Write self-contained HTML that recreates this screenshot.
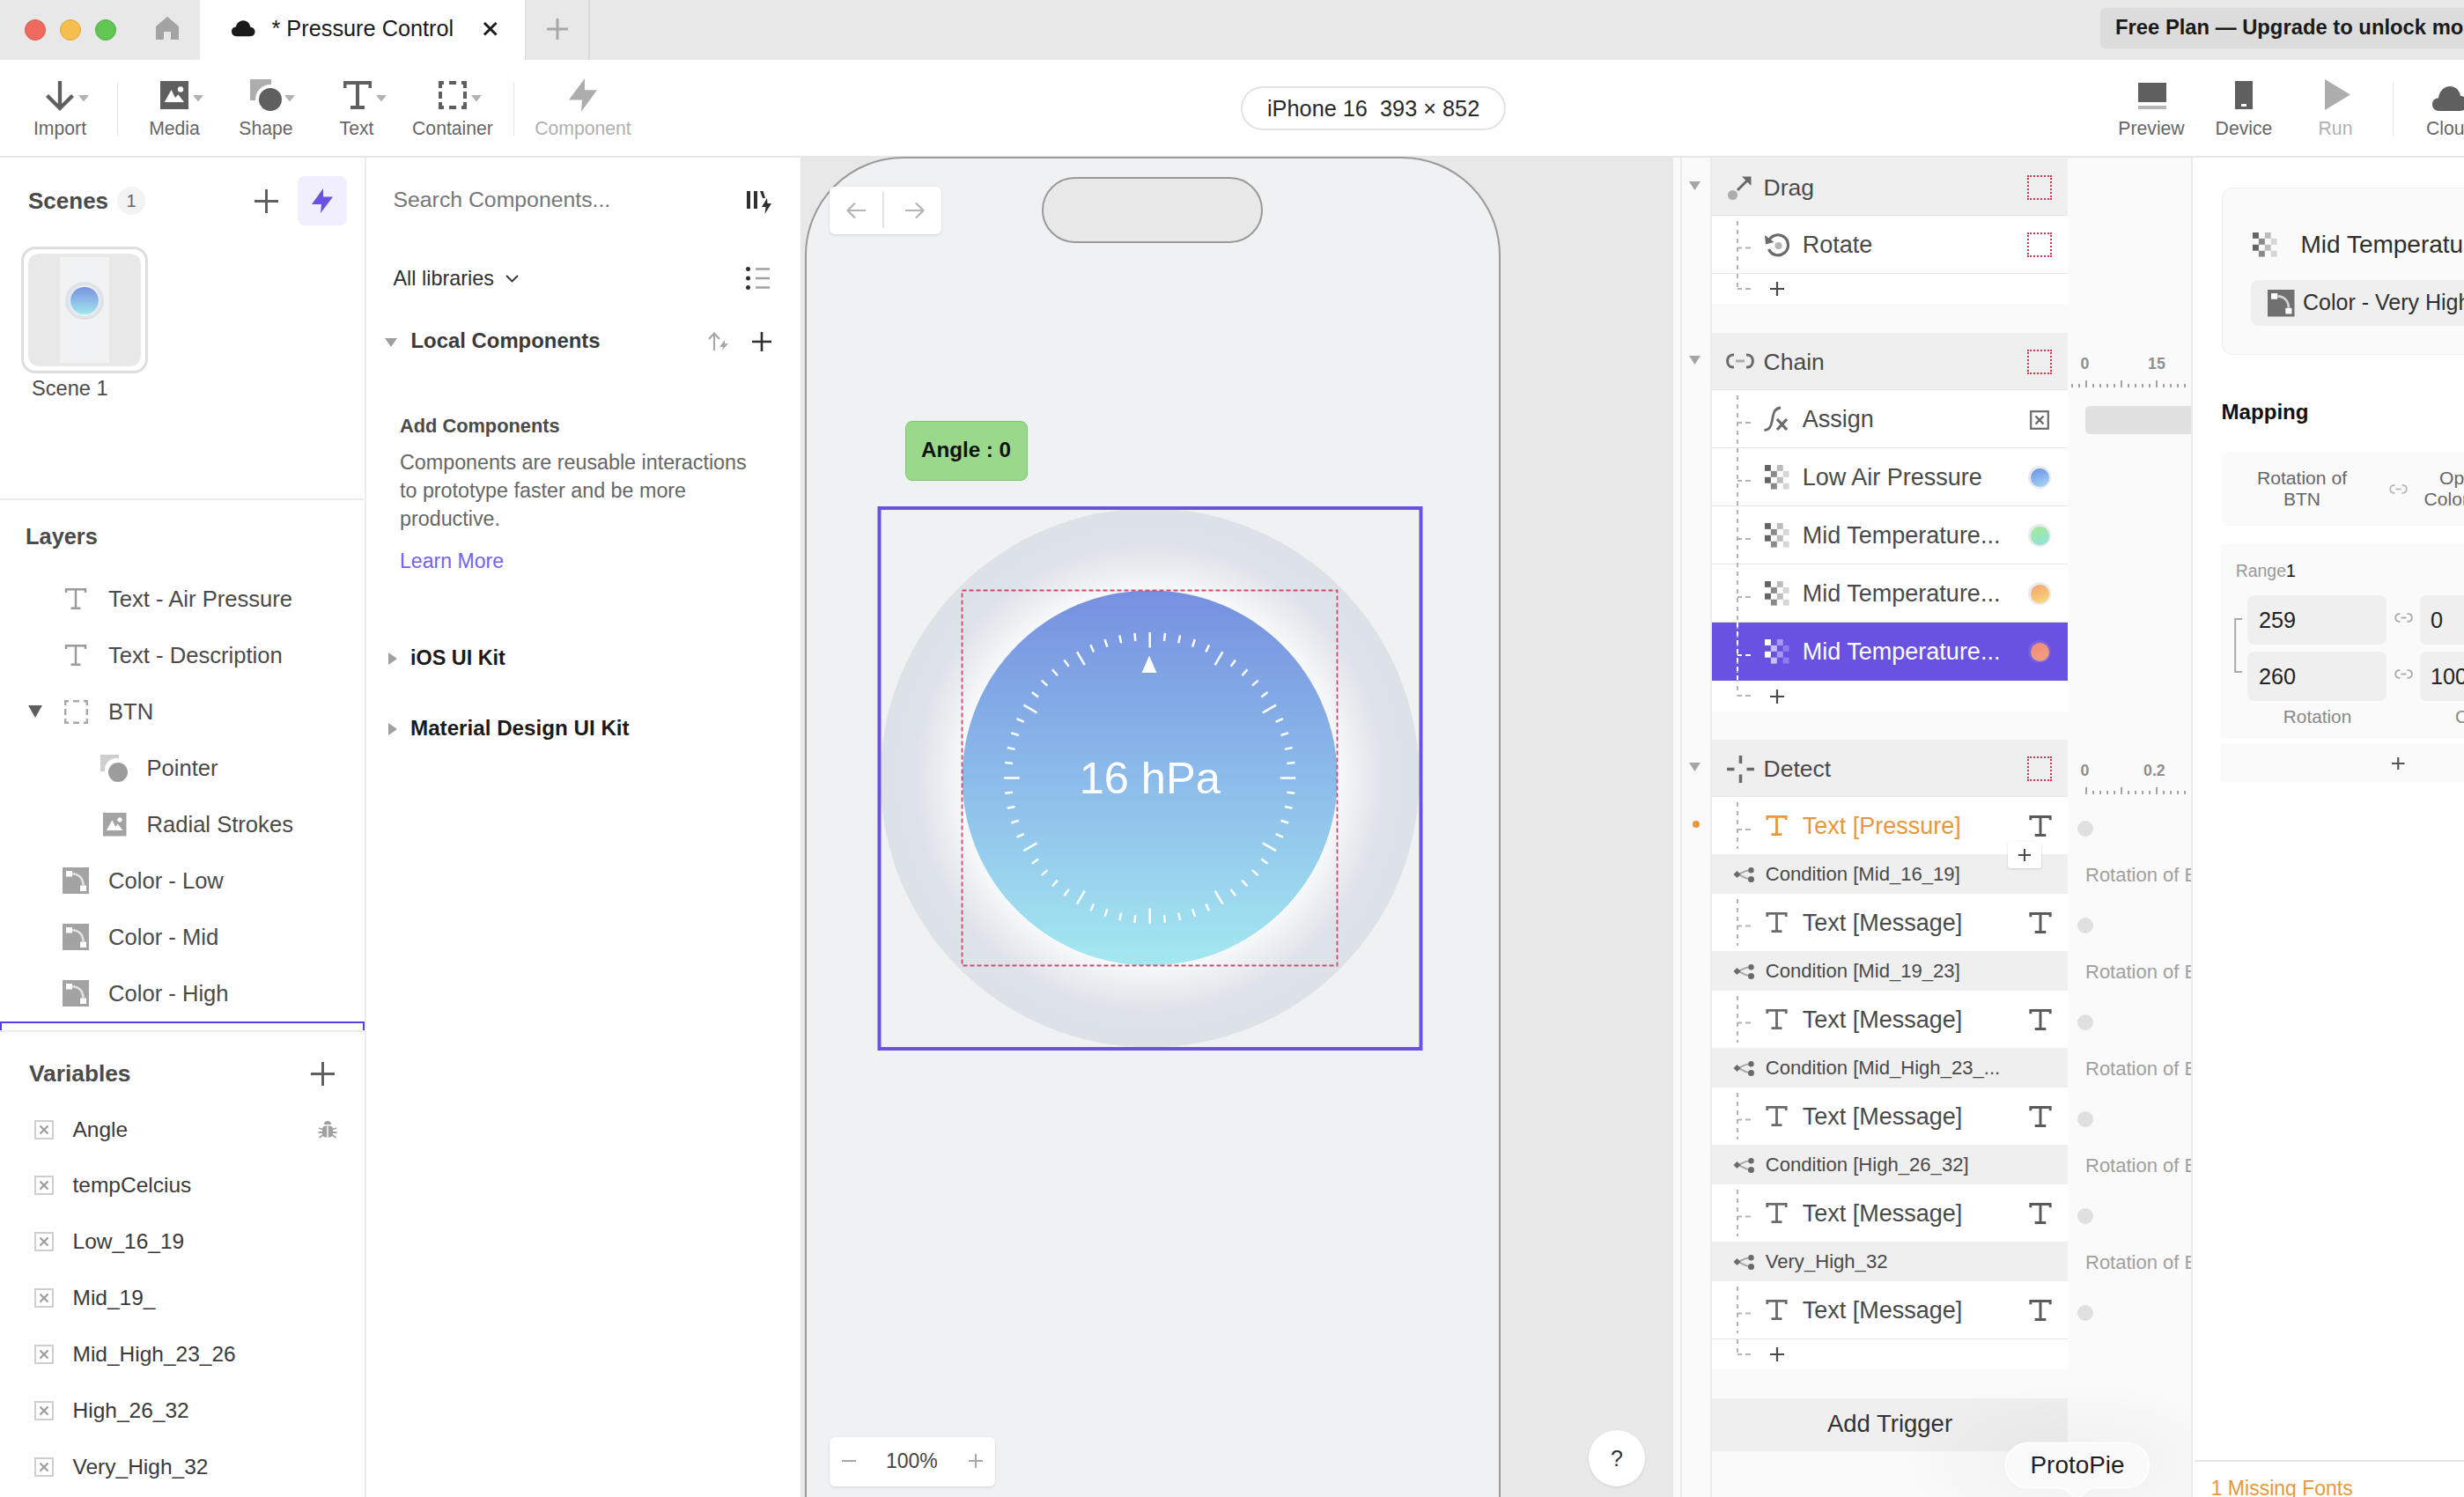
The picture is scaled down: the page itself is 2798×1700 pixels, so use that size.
<!DOCTYPE html>
<html><head><meta charset="utf-8">
<style>
*{margin:0;padding:0;box-sizing:border-box}
html,body{width:2798px;height:1700px;overflow:hidden;background:#fff}
body{position:relative;font-family:"Liberation Sans",sans-serif;color:#333}
.a{position:absolute}
.t{position:absolute;white-space:nowrap;font-family:"Liberation Sans",sans-serif}
svg{position:absolute;overflow:visible}
</style></head><body>

<!-- ============ TAB BAR ============ -->
<div class="a" style="left:0;top:0;width:2798px;height:68px;background:#e8e8e8"></div>
<div class="a" style="left:28px;top:21.5px;width:24px;height:24px;border-radius:50%;background:#ee6a5f;border:1px solid #d85a50"></div>
<div class="a" style="left:68px;top:21.5px;width:24px;height:24px;border-radius:50%;background:#f5be4f;border:1px solid #dea73b"></div>
<div class="a" style="left:108px;top:21.5px;width:24px;height:24px;border-radius:50%;background:#62c655;border:1px solid #52ad45"></div>
<svg style="left:177px;top:19px" width="26" height="26" viewBox="0 0 26 26"><path d="M13 0 L26 11 V26 H17 V17 H9 V26 H0 V11 Z" fill="#a3a3a3"/></svg>
<div class="a" style="left:227px;top:0;width:369px;height:68px;background:#fff"></div>
<svg style="left:263px;top:22.5px" width="26.5" height="18.5" viewBox="0 0 28 19"><path d="M6 19 C1 19 0 15 0 13 C0 10 2 8 5 8 C6 3 10 0 14 0 C19 0 22 4 22.5 8 C26 8 28 11 28 13.5 C28 17 26 19 22 19 Z" fill="#1a1a1a"/></svg>
<div class="t" style="left:308.5px;top:15.5px;line-height:32px;font-size:25.3px;color:#1a1a1a">* Pressure Control</div>
<svg style="left:548px;top:23.5px" width="17.5" height="17.5" viewBox="0 0 18 18"><path d="M2 2 L16 16 M16 2 L2 16" stroke="#1a1a1a" stroke-width="3"/></svg>
<div class="a" style="left:596px;top:0;width:1px;height:68px;background:#dcdcdc"></div>
<div class="a" style="left:668px;top:0;width:2px;height:68px;background:#d8d8d8"></div>
<svg style="left:621px;top:21px" width="24" height="24" viewBox="0 0 24 24"><path d="M12 0 V24 M0 12 H24" stroke="#a8a8a8" stroke-width="3"/></svg>
<div class="a" style="left:2385px;top:9px;width:430px;height:46px;background:#dcdcdc;border-radius:6px"></div>
<div class="t" style="left:2402px;top:15px;line-height:32px;font-size:23.8px;font-weight:700;color:#1a1a1a">Free Plan — Upgrade to unlock mo</div>

<!-- ============ TOOLBAR ============ -->
<div class="a" style="left:0;top:177px;width:2798px;height:2px;background:#e6e6e6"></div>

<!-- import -->
<svg style="left:50px;top:90px" width="36" height="36" viewBox="0 0 36 36"><path d="M18 2 V33 M3.5 18.5 L18 33 L32.5 18.5" stroke="#5f5f5f" stroke-width="4.3" fill="none"/></svg>
<svg style="left:89px;top:108px" width="12" height="8" viewBox="0 0 12 8"><path d="M0 0 H12 L6 7.5 Z" fill="#b3b3b3"/></svg>
<div class="a" style="left:132.5px;top:94px;width:1.5px;height:60px;background:#e3e3e3"></div>
<!-- media -->
<svg style="left:182px;top:92px" width="32" height="32" viewBox="0 0 32 32"><rect width="32" height="32" fill="#5f5f5f"/><path d="M4.8 24 L12.5 10 L17 19 L20.3 15.3 L27 24 Z" fill="#fff"/><circle cx="23" cy="9.4" r="3.2" fill="#fff"/></svg>
<svg style="left:219px;top:108px" width="12" height="8" viewBox="0 0 12 8"><path d="M0 0 H12 L6 7.5 Z" fill="#b3b3b3"/></svg>
<!-- shape -->
<svg style="left:284px;top:90px" width="40" height="40" viewBox="0 0 40 40"><path d="M0 0 H24 V6 A17 17 0 0 0 6 24 H0 Z" fill="#adadad"/><circle cx="23" cy="23" r="13" fill="#5f5f5f"/></svg>
<svg style="left:323px;top:108px" width="12" height="8" viewBox="0 0 12 8"><path d="M0 0 H12 L6 7.5 Z" fill="#b3b3b3"/></svg>
<!-- text -->
<svg style="left:390px;top:92px" width="32" height="32" viewBox="0 0 32 32"><path d="M0 0 H32 V8 H28.5 V4 H18 V28 H24 V32 H8 V28 H14 V4 H3.5 V8 H0 Z" fill="#5f5f5f"/></svg>
<svg style="left:427px;top:108px" width="12" height="8" viewBox="0 0 12 8"><path d="M0 0 H12 L6 7.5 Z" fill="#b3b3b3"/></svg>
<!-- container -->
<svg style="left:498px;top:92px" width="32" height="32" viewBox="0 0 32 32"><path d="M2 8 V2 H6 M12 2 H20 M26 2 H30 V8 M30 12 V20 M30 24 V30 H26 M20 30 H12 M6 30 H2 V24 M2 20 V12" stroke="#5f5f5f" stroke-width="4" fill="none"/></svg>
<svg style="left:535px;top:108px" width="12" height="8" viewBox="0 0 12 8"><path d="M0 0 H12 L6 7.5 Z" fill="#b3b3b3"/></svg>
<div class="a" style="left:582.5px;top:94px;width:1.5px;height:60px;background:#e3e3e3"></div>
<!-- component -->
<svg style="left:646px;top:89px" width="32" height="38" viewBox="0 0 32 38"><path d="M18 0 L0 24.5 H15 L14 38 L32 13.3 H18 Z" fill="#adadad"/></svg>
<div class="t" style="left:28px;top:132px;width:80px;text-align:center;line-height:28px;font-size:21.2px;color:#666">Import</div>
<div class="t" style="left:158px;top:132px;width:80px;text-align:center;line-height:28px;font-size:21.2px;color:#666">Media</div>
<div class="t" style="left:262px;top:132px;width:80px;text-align:center;line-height:28px;font-size:21.2px;color:#666">Shape</div>
<div class="t" style="left:365px;top:132px;width:80px;text-align:center;line-height:28px;font-size:21.2px;color:#666">Text</div>
<div class="t" style="left:464px;top:132px;width:100px;text-align:center;line-height:28px;font-size:21.2px;color:#666">Container</div>
<div class="t" style="left:602px;top:132px;width:120px;text-align:center;line-height:28px;font-size:21.2px;color:#b0b0b0">Component</div>
<!-- device pill -->
<div class="a" style="left:1409px;top:98px;width:301px;height:50px;border:2px solid #e3e3e3;border-radius:25px"></div>
<div class="t" style="left:1439px;top:107px;line-height:32px;font-size:25.3px;color:#2a2a2a">iPhone 16&nbsp;&nbsp;393 × 852</div>
<!-- right tools -->
<svg style="left:2428px;top:94px" width="32" height="30" viewBox="0 0 32 30"><rect width="32" height="22" fill="#5f5f5f"/><rect y="26" width="32" height="4" fill="#b5b5b5"/></svg>
<svg style="left:2538px;top:92px" width="20" height="32" viewBox="0 0 20 32"><rect width="20" height="32" fill="#5f5f5f"/><rect x="7" y="26" width="6" height="3" fill="#fff"/></svg>
<svg style="left:2640px;top:90px" width="29" height="35" viewBox="0 0 29 35"><path d="M0 0 L29 17.5 L0 35 Z" fill="#adadad"/></svg>
<div class="a" style="left:2716.5px;top:94px;width:1.5px;height:60px;background:#e3e3e3"></div>
<svg style="left:2762px;top:98px" width="40" height="28" viewBox="0 0 40 28"><path d="M8 28 C2 28 0 24 0 20.5 C0 16 3 13.5 7 13.5 C8 5 14 0 20 0 C27 0 31 5 32 11 C37 11 40 15 40 19.5 C40 25 36 28 31 28 Z" fill="#5f5f5f"/></svg>
<div class="t" style="left:2393px;top:132px;width:100px;text-align:center;line-height:28px;font-size:21.2px;color:#666">Preview</div>
<div class="t" style="left:2498px;top:132px;width:100px;text-align:center;line-height:28px;font-size:21.2px;color:#666">Device</div>
<div class="t" style="left:2602px;top:132px;width:100px;text-align:center;line-height:28px;font-size:21.2px;color:#b0b0b0">Run</div>
<div class="t" style="left:2755px;top:132px;line-height:28px;font-size:21.2px;color:#666">Cloud</div>



<!-- ============ LEFT PANEL ============ -->
<div class="a" style="left:414px;top:179px;width:2px;height:1521px;background:#ececec"></div>
<div class="t" style="left:32px;top:212px;line-height:32px;font-size:26px;font-weight:700;color:#4a4a4a">Scenes</div>
<div class="a" style="left:133px;top:212px;width:32px;height:32px;border-radius:50%;background:#f3f3f3"></div>
<div class="t" style="left:133px;top:212px;width:32px;text-align:center;line-height:32px;font-size:20px;color:#666">1</div>
<svg style="left:289px;top:215px" width="27" height="27" viewBox="0 0 27 27"><path d="M13.5 0 V27 M0 13.5 H27" stroke="#5f5f5f" stroke-width="3"/></svg>
<div class="a" style="left:338px;top:200px;width:56px;height:56px;border-radius:8px;background:#f1effd"></div>
<svg style="left:354px;top:214px" width="24" height="28" viewBox="0 0 24 28"><path d="M13 0 L0 18 H11 L10 28 L24 9.5 H13 Z" fill="#6a50e3"/></svg>
<!-- scene thumb -->
<div class="a" style="left:24px;top:280px;width:144px;height:144px;border-radius:16px;border:3.5px solid #dedede;background:#fff"></div>
<div class="a" style="left:32px;top:288px;width:128px;height:128px;border-radius:12px;background:#e8e8e8;overflow:hidden">
  <div class="a" style="left:36px;top:4px;width:56px;height:120px;background:#f1f2f4"></div>
  <div class="a" style="left:42px;top:31.5px;width:43.5px;height:43.5px;border-radius:50%;background:radial-gradient(circle closest-side,#f4f5f8 0,#f4f5f8 72%,#dfe2e9 86%,#dde1e8 100%)"></div>
  <div class="a" style="left:48px;top:37.5px;width:31.5px;height:31.5px;border-radius:50%;background:linear-gradient(#7792e0,#a3e6ef)"></div>
</div>
<div class="t" style="left:36px;top:425px;line-height:32px;font-size:23.6px;color:#4a4a4a">Scene 1</div>
<div class="a" style="left:0;top:566px;width:413px;height:2px;background:#ececec"></div>
<div class="t" style="left:29px;top:592.5px;line-height:32px;font-size:25.4px;font-weight:700;color:#4a4a4a">Layers</div>
<div class="t" style="left:123px;top:663.5px;line-height:32px;font-size:25.6px;color:#4a4a4a">Text - Air Pressure</div>
<svg style="left:74px;top:667.5px" width="24" height="24" viewBox="0 0 24 24"><path d="M1 5 V1.2 H23 V5 M12 1.2 V22.8 M6.5 22.8 H17.5" stroke="#9a9a9a" stroke-width="2.4" fill="none"/></svg>
<div class="t" style="left:123px;top:727.5px;line-height:32px;font-size:25.6px;color:#4a4a4a">Text - Description</div>
<svg style="left:74px;top:731.5px" width="24" height="24" viewBox="0 0 24 24"><path d="M1 5 V1.2 H23 V5 M12 1.2 V22.8 M6.5 22.8 H17.5" stroke="#9a9a9a" stroke-width="2.4" fill="none"/></svg>
<div class="t" style="left:123px;top:791.5px;line-height:32px;font-size:25.6px;color:#4a4a4a">BTN</div>
<svg style="left:32px;top:800.5px" width="16" height="14" viewBox="0 0 16 14"><path d="M0 0 H16 L8 14 Z" fill="#5f5f5f"/></svg>
<svg style="left:73px;top:794.5px" width="27" height="27" viewBox="0 0 27 27"><path d="M1.2 6 V1.2 H5 M10 1.2 H17 M22 1.2 H25.8 V6 M25.8 10 V17 M25.8 21 V25.8 H22 M17 25.8 H10 M5 25.8 H1.2 V21 M1.2 17 V10" stroke="#a8a8a8" stroke-width="2.4" fill="none"/></svg>
<div class="t" style="left:166.5px;top:855.5px;line-height:32px;font-size:25.6px;color:#4a4a4a">Pointer</div>
<svg style="left:114px;top:856.5px" width="32" height="32" viewBox="0 0 32 32"><path d="M0 0 H21 V4.5 A13 13 0 0 0 5 19 H0 Z" fill="#cfcfcf"/><circle cx="20" cy="20" r="11" fill="#9c9c9c"/></svg>
<div class="t" style="left:166.5px;top:919.5px;line-height:32px;font-size:25.6px;color:#4a4a4a">Radial Strokes</div>
<svg style="left:116.5px;top:922.5px" width="26.5" height="26.5" viewBox="0 0 32 32"><rect width="32" height="32" fill="#a3a3a3"/><path d="M4.8 24 L12.5 10 L17 19 L20.3 15.3 L27 24 Z" fill="#fff"/><circle cx="23" cy="9.4" r="3.2" fill="#fff"/></svg>
<div class="t" style="left:123px;top:983.5px;line-height:32px;font-size:25.6px;color:#4a4a4a">Color - Low</div>
<svg style="left:71px;top:984.5px" width="30" height="30" viewBox="0 0 30 30"><rect width="30" height="30" fill="#a3a3a3"/><rect x="4" y="4" width="7" height="6.5" fill="#fff"/><rect x="20" y="20.5" width="7" height="6.5" fill="#fff"/><path d="M11 7.2 C18 7.2 23.5 12 23.5 20.5" stroke="#e3e3e3" stroke-width="2.6" fill="none"/></svg>
<div class="t" style="left:123px;top:1047.5px;line-height:32px;font-size:25.6px;color:#4a4a4a">Color - Mid</div>
<svg style="left:71px;top:1048.5px" width="30" height="30" viewBox="0 0 30 30"><rect width="30" height="30" fill="#a3a3a3"/><rect x="4" y="4" width="7" height="6.5" fill="#fff"/><rect x="20" y="20.5" width="7" height="6.5" fill="#fff"/><path d="M11 7.2 C18 7.2 23.5 12 23.5 20.5" stroke="#e3e3e3" stroke-width="2.6" fill="none"/></svg>
<div class="t" style="left:123px;top:1111.5px;line-height:32px;font-size:25.6px;color:#4a4a4a">Color - High</div>
<svg style="left:71px;top:1112.5px" width="30" height="30" viewBox="0 0 30 30"><rect width="30" height="30" fill="#a3a3a3"/><rect x="4" y="4" width="7" height="6.5" fill="#fff"/><rect x="20" y="20.5" width="7" height="6.5" fill="#fff"/><path d="M11 7.2 C18 7.2 23.5 12 23.5 20.5" stroke="#e3e3e3" stroke-width="2.6" fill="none"/></svg>

<div class="a" style="left:0;top:1160px;width:414px;height:10px;border:2.5px solid #5b3fe0;border-bottom:none"></div>
<div class="a" style="left:0;top:1170px;width:414px;height:2px;background:#ececec"></div>
<div class="t" style="left:33px;top:1202.5px;line-height:32px;font-size:26.3px;font-weight:700;color:#4a4a4a">Variables</div>
<svg style="left:352.5px;top:1205.5px" width="27" height="27" viewBox="0 0 27 27"><path d="M13.5 0 V27 M0 13.5 H27" stroke="#5f5f5f" stroke-width="3"/></svg>
<svg style="left:39px;top:1271.5px" width="22" height="22" viewBox="0 0 22 22"><rect x="1" y="1" width="20" height="20" fill="none" stroke="#cfcfcf" stroke-width="2"/><path d="M6.5 6.5 L15.5 15.5 M15.5 6.5 L6.5 15.5" stroke="#9a9a9a" stroke-width="2"/></svg>
<div class="t" style="left:82.5px;top:1266.5px;line-height:32px;font-size:24.5px;color:#3a3a3a">Angle</div>
<svg style="left:39px;top:1335.35px" width="22" height="22" viewBox="0 0 22 22"><rect x="1" y="1" width="20" height="20" fill="none" stroke="#cfcfcf" stroke-width="2"/><path d="M6.5 6.5 L15.5 15.5 M15.5 6.5 L6.5 15.5" stroke="#9a9a9a" stroke-width="2"/></svg>
<div class="t" style="left:82.5px;top:1330.35px;line-height:32px;font-size:24.5px;color:#3a3a3a">tempCelcius</div>
<svg style="left:39px;top:1399.2px" width="22" height="22" viewBox="0 0 22 22"><rect x="1" y="1" width="20" height="20" fill="none" stroke="#cfcfcf" stroke-width="2"/><path d="M6.5 6.5 L15.5 15.5 M15.5 6.5 L6.5 15.5" stroke="#9a9a9a" stroke-width="2"/></svg>
<div class="t" style="left:82.5px;top:1394.2px;line-height:32px;font-size:24.5px;color:#3a3a3a">Low_16_19</div>
<svg style="left:39px;top:1463.05px" width="22" height="22" viewBox="0 0 22 22"><rect x="1" y="1" width="20" height="20" fill="none" stroke="#cfcfcf" stroke-width="2"/><path d="M6.5 6.5 L15.5 15.5 M15.5 6.5 L6.5 15.5" stroke="#9a9a9a" stroke-width="2"/></svg>
<div class="t" style="left:82.5px;top:1458.05px;line-height:32px;font-size:24.5px;color:#3a3a3a">Mid_19_</div>
<svg style="left:39px;top:1526.9px" width="22" height="22" viewBox="0 0 22 22"><rect x="1" y="1" width="20" height="20" fill="none" stroke="#cfcfcf" stroke-width="2"/><path d="M6.5 6.5 L15.5 15.5 M15.5 6.5 L6.5 15.5" stroke="#9a9a9a" stroke-width="2"/></svg>
<div class="t" style="left:82.5px;top:1521.9px;line-height:32px;font-size:24.5px;color:#3a3a3a">Mid_High_23_26</div>
<svg style="left:39px;top:1590.75px" width="22" height="22" viewBox="0 0 22 22"><rect x="1" y="1" width="20" height="20" fill="none" stroke="#cfcfcf" stroke-width="2"/><path d="M6.5 6.5 L15.5 15.5 M15.5 6.5 L6.5 15.5" stroke="#9a9a9a" stroke-width="2"/></svg>
<div class="t" style="left:82.5px;top:1585.75px;line-height:32px;font-size:24.5px;color:#3a3a3a">High_26_32</div>
<svg style="left:39px;top:1654.6px" width="22" height="22" viewBox="0 0 22 22"><rect x="1" y="1" width="20" height="20" fill="none" stroke="#cfcfcf" stroke-width="2"/><path d="M6.5 6.5 L15.5 15.5 M15.5 6.5 L6.5 15.5" stroke="#9a9a9a" stroke-width="2"/></svg>
<div class="t" style="left:82.5px;top:1649.6px;line-height:32px;font-size:24.5px;color:#3a3a3a">Very_High_32</div>
<svg style="left:361px;top:1272px" width="22" height="22" viewBox="0 0 22 22"><path d="M7 5 A4 4 0 0 1 15 5 Z" fill="#a0a0a0"/><rect x="5" y="6.5" width="12" height="13" rx="4" fill="#a0a0a0"/><path d="M11 7 V20 M1 9 L5 10.5 M21 9 L17 10.5 M0.5 14 H5 M21.5 14 H17 M1.5 20 L5.5 17 M20.5 20 L16.5 17" stroke="#a0a0a0" stroke-width="1.8"/><path d="M11 7 V20" stroke="#fff" stroke-width="1.4"/></svg>


<!-- ============ COMPONENTS PANEL ============ -->
<div class="a" style="left:909px;top:179px;width:1px;height:1521px;background:#e6e6e6"></div>
<div class="t" style="left:446.5px;top:211px;line-height:32px;font-size:24.8px;color:#777">Search Components...</div>
<svg style="left:848px;top:217px" width="30" height="26" viewBox="0 0 30 26"><rect x="0" y="0" width="4" height="20" fill="#2f2f2f"/><rect x="8" y="0" width="4" height="20" fill="#2f2f2f"/><path d="M15 0 H18.5 L21 8 H18 Z" fill="#2f2f2f"/><path d="M23 8 L17 18 H21.5 L20.5 26 L28 14 H23.5 Z" fill="#2f2f2f"/></svg>
<div class="t" style="left:446.5px;top:299.5px;line-height:32px;font-size:23.4px;color:#2f2f2f">All libraries</div>
<svg style="left:574px;top:312px" width="15" height="9" viewBox="0 0 15 9"><path d="M1 1 L7.5 7.5 L14 1" stroke="#2f2f2f" stroke-width="1.8" fill="none"/></svg>
<svg style="left:847px;top:303px" width="28" height="26" viewBox="0 0 28 26"><circle cx="2.5" cy="2.5" r="2.5" fill="#2f2f2f"/><circle cx="2.5" cy="13" r="2.5" fill="#2f2f2f"/><circle cx="2.5" cy="23.5" r="2.5" fill="#2f2f2f"/><path d="M11 2.5 H27 M11 13 H27 M11 23.5 H27" stroke="#a0a0a0" stroke-width="2.6"/></svg>
<svg style="left:437px;top:384px" width="14" height="10" viewBox="0 0 14 10"><path d="M0 0 H14 L7 10 Z" fill="#a0a0a0"/></svg>
<div class="t" style="left:466.5px;top:371px;line-height:32px;font-size:23.9px;font-weight:700;color:#3a3a3a">Local Components</div>
<svg style="left:804px;top:377px" width="25" height="21" viewBox="0 0 25 21"><path d="M7 21 V2 M1 8 L7 1.5 L13 8" stroke="#a8a8a8" stroke-width="2.2" fill="none"/><path d="M19 9 L13 17 H17 L16 21 L23 13 H19 Z" fill="#a8a8a8"/></svg>
<svg style="left:854px;top:376.5px" width="22" height="22" viewBox="0 0 22 22"><path d="M11 0 V22 M0 11 H22" stroke="#2f2f2f" stroke-width="2.6"/></svg>
<div class="t" style="left:454px;top:467.5px;line-height:32px;font-size:21.8px;font-weight:700;color:#4a4a4a">Add Components</div>
<div class="t" style="left:454px;top:509px;line-height:32px;font-size:23.3px;color:#666">Components are reusable interactions<br>to prototype faster and be more<br>productive.</div>
<div class="t" style="left:454px;top:620.5px;line-height:32px;font-size:23.1px;color:#7462ee">Learn More</div>
<svg style="left:440.5px;top:741px" width="10" height="14" viewBox="0 0 10 14"><path d="M0 0 L10 7 L0 14 Z" fill="#a0a0a0"/></svg>
<div class="t" style="left:466px;top:731px;line-height:32px;font-size:23.4px;font-weight:700;color:#1a1a1a">iOS UI Kit</div>
<svg style="left:440.5px;top:821px" width="10" height="14" viewBox="0 0 10 14"><path d="M0 0 L10 7 L0 14 Z" fill="#a0a0a0"/></svg>
<div class="t" style="left:466px;top:811px;line-height:32px;font-size:24.2px;font-weight:700;color:#1a1a1a">Material Design UI Kit</div>


<!-- ============ CANVAS ============ -->
<div class="a" style="left:910px;top:179px;width:990px;height:1521px;background:#e8e8e8"></div>
<svg style="left:910px;top:179px" width="990" height="1521" viewBox="910 179 990 1521">
  <path d="M915 1700 V290 A111 111 0 0 1 1026 179 H1592 A111 111 0 0 1 1703 290 V1700" fill="#f0f1f3" stroke="#9a9a9a" stroke-width="2"/>
  <rect x="1184" y="202" width="249" height="73" rx="36.5" fill="#e8e8e8" stroke="#999" stroke-width="2"/>
</svg>
<!-- nav arrows -->
<div class="a" style="left:942px;top:212px;width:127px;height:54px;background:#fff;border-radius:6px;box-shadow:0 1px 3px rgba(0,0,0,0.12)"></div>
<div class="a" style="left:1002px;top:218px;width:1.5px;height:41px;background:#e3e3e3"></div>
<svg style="left:961px;top:229px" width="22" height="20" viewBox="0 0 22 20"><path d="M22 10 H2 M10 1.5 L1.5 10 L10 18.5" stroke="#b5b5b5" stroke-width="2.2" fill="none"/></svg>
<svg style="left:1027.5px;top:229px" width="22" height="20" viewBox="0 0 22 20"><path d="M0 10 H20 M12 1.5 L20.5 10 L12 18.5" stroke="#b5b5b5" stroke-width="2.2" fill="none"/></svg>
<!-- angle label -->
<div class="a" style="left:1027.5px;top:478px;width:139px;height:67.5px;background:#9ad98c;border:1.5px solid #7fc472;border-radius:8px"></div>
<div class="t" style="left:1027.5px;top:495px;width:139px;text-align:center;line-height:32px;font-size:24.2px;font-weight:700;color:#111">Angle : 0</div>
<!-- dial -->
<svg style="left:990px;top:570px" width="640" height="630" viewBox="990 570 640 630">
  <defs>
    <radialGradient id="glow" cx="1305.7" cy="883.4" r="306" gradientUnits="userSpaceOnUse">
      <stop offset="0.69" stop-color="#f8f9fa"/>
      <stop offset="0.77" stop-color="#eceef2"/>
      <stop offset="0.87" stop-color="#dee2e9"/>
      <stop offset="1" stop-color="#dde1e8"/>
    </radialGradient>
    <linearGradient id="blue" x1="0" y1="0" x2="0" y2="1">
      <stop offset="0" stop-color="#7690e0"/>
      <stop offset="0.5" stop-color="#8cbbea"/>
      <stop offset="1" stop-color="#a4e8f0"/>
    </linearGradient>
  </defs>
  <circle cx="1305.7" cy="883.4" r="306" fill="url(#glow)"/>
  <circle cx="1305.7" cy="883.4" r="213" fill="url(#blue)"/>
  <path d="M1305.70 735.40 L1305.70 717.90 M1322.06 727.76 L1323.00 718.81 M1338.24 730.32 L1340.11 721.52 M1354.06 734.56 L1356.84 726.00 M1369.35 740.43 L1373.01 732.21 M1379.70 755.23 L1388.45 740.07 M1397.69 756.79 L1402.98 749.51 M1410.42 767.10 L1416.44 760.41 M1422.00 778.68 L1428.69 772.66 M1432.31 791.41 L1439.59 786.12 M1433.87 809.40 L1449.03 800.65 M1448.67 819.75 L1456.89 816.09 M1454.54 835.04 L1463.10 832.26 M1458.78 850.86 L1467.58 848.99 M1461.34 867.04 L1470.29 866.10 M1453.70 883.40 L1471.20 883.40 M1461.34 899.76 L1470.29 900.70 M1458.78 915.94 L1467.58 917.81 M1454.54 931.76 L1463.10 934.54 M1448.67 947.05 L1456.89 950.71 M1433.87 957.40 L1449.03 966.15 M1432.31 975.39 L1439.59 980.68 M1422.00 988.12 L1428.69 994.14 M1410.42 999.70 L1416.44 1006.39 M1397.69 1010.01 L1402.98 1017.29 M1379.70 1011.57 L1388.45 1026.73 M1369.35 1026.37 L1373.01 1034.59 M1354.06 1032.24 L1356.84 1040.80 M1338.24 1036.48 L1340.11 1045.28 M1322.06 1039.04 L1323.00 1047.99 M1305.70 1031.40 L1305.70 1048.90 M1289.34 1039.04 L1288.40 1047.99 M1273.16 1036.48 L1271.29 1045.28 M1257.34 1032.24 L1254.56 1040.80 M1242.05 1026.37 L1238.39 1034.59 M1231.70 1011.57 L1222.95 1026.73 M1213.71 1010.01 L1208.42 1017.29 M1200.98 999.70 L1194.96 1006.39 M1189.40 988.12 L1182.71 994.14 M1179.09 975.39 L1171.81 980.68 M1177.53 957.40 L1162.37 966.15 M1162.73 947.05 L1154.51 950.71 M1156.86 931.76 L1148.30 934.54 M1152.62 915.94 L1143.82 917.81 M1150.06 899.76 L1141.11 900.70 M1157.70 883.40 L1140.20 883.40 M1150.06 867.04 L1141.11 866.10 M1152.62 850.86 L1143.82 848.99 M1156.86 835.04 L1148.30 832.26 M1162.73 819.75 L1154.51 816.09 M1177.53 809.40 L1162.37 800.65 M1179.09 791.41 L1171.81 786.12 M1189.40 778.68 L1182.71 772.66 M1200.98 767.10 L1194.96 760.41 M1213.71 756.79 L1208.42 749.51 M1231.70 755.23 L1222.95 740.07 M1242.05 740.43 L1238.39 732.21 M1257.34 734.56 L1254.56 726.00 M1273.16 730.32 L1271.29 721.52 M1289.34 727.76 L1288.40 718.81" stroke="#fff" stroke-width="2.5" stroke-linecap="butt"/>
  <path d="M1305 744.5 L1313.5 764 H1296.5 Z" fill="#fff"/>
  <rect x="1092.5" y="670.5" width="426" height="426" fill="none" stroke="#d04a6a" stroke-width="1.8" stroke-dasharray="5 3"/>
  <rect x="998.5" y="577" width="615" height="614" fill="none" stroke="#6a50e3" stroke-width="4"/>
</svg>
<div class="t" style="left:1205.7px;top:850px;width:200px;text-align:center;line-height:68px;font-size:50.5px;color:#fff">16 hPa</div>
<!-- zoom control -->
<div class="a" style="left:942px;top:1631.5px;width:188px;height:56px;background:#fff;border-radius:6px;box-shadow:0 1px 3px rgba(0,0,0,0.12)"></div>
<div class="a" style="left:956px;top:1658px;width:16px;height:2px;background:#a8a8a8"></div>
<div class="t" style="left:1006px;top:1643px;line-height:32px;font-size:23px;color:#444">100%</div>
<svg style="left:1100px;top:1651px" width="16" height="16" viewBox="0 0 16 16"><path d="M8 0 V16 M0 8 H16" stroke="#a8a8a8" stroke-width="2"/></svg>
<div class="a" style="left:1804px;top:1624px;width:64px;height:64px;border-radius:50%;background:#fff;box-shadow:0 1px 3px rgba(0,0,0,0.1)"></div>
<div class="t" style="left:1804px;top:1640px;width:64px;text-align:center;line-height:32px;font-size:25px;color:#333">?</div>

<!-- ============ TRIGGERS PANEL ============ -->
<div class="a" style="left:1900px;top:179px;width:590px;height:1521px;background:#fafafa"></div>
<div class="a" style="left:1908px;top:179px;width:2px;height:1521px;background:#ebebeb"></div>
<div class="a" style="left:1942px;top:179px;width:2px;height:1521px;background:#ebebeb"></div>
<div class="a" style="left:2488px;top:179px;width:2px;height:1521px;background:#ebebeb"></div>
<div class="a" style="left:1944px;top:180px;width:404px;height:65px;background:#efefef"></div>
<div class="a" style="left:1944px;top:243.5px;width:404px;height:1.5px;background:#e6e6e6"></div>
<svg style="left:1917.5px;top:205.5px" width="13" height="10" viewBox="0 0 13 10"><path d="M0 0 H13 L6.5 10 Z" fill="#a5a5a5"/></svg>
<svg style="left:1962px;top:198.5px" width="28" height="28" viewBox="0 0 28 28"><circle cx="5.5" cy="22.5" r="5.5" fill="#adadad"/><path d="M11 17 L25 3" stroke="#6a6a6a" stroke-width="3"/><path d="M16 1.5 H26.5 V12 Z" fill="#6a6a6a"/></svg>
<div class="t" style="left:2002.6px;top:195.5px;line-height:34px;font-size:26.5px;font-weight:400;color:#4a4a4a">Drag</div>
<div class="a" style="left:2302px;top:198.5px;width:28px;height:28px;border:2px dotted #d0354f"></div>
<div class="a" style="left:1944px;top:245px;width:404px;height:66px;background:#fff"></div>
<div class="a" style="left:1944px;top:309.5px;width:404px;height:1.5px;background:#e6e6e6"></div>
<svg style="left:2004px;top:263.5px" width="30" height="30" viewBox="0 0 30 30"><path d="M4 11 A11.5 11.5 0 1 1 4.5 19" stroke="#6a6a6a" stroke-width="3.2" fill="none"/><path d="M0 3 L1 13.5 L10.5 11 Z" fill="#6a6a6a"/><circle cx="15.5" cy="15" r="4" fill="#b5b5b5"/></svg>
<div class="t" style="left:2046.8px;top:261px;line-height:34px;font-size:27px;font-weight:400;color:#4a4a4a">Rotate</div>
<div class="a" style="left:2302px;top:264px;width:28px;height:28px;border:2px dotted #d0354f"></div>
<div class="a" style="left:1944px;top:311px;width:404px;height:34px;background:#fff"></div>
<svg style="left:2010px;top:320.0px" width="16" height="16" viewBox="0 0 16 16"><path d="M8 0 V16 M0 8 H16" stroke="#4a4a4a" stroke-width="2.2"/></svg>
<svg style="left:1970px;top:251px" width="22" height="77" viewBox="0 0 22 77"><path d="M3 0 V77" stroke="#b3b3b3" stroke-width="2" stroke-dasharray="5 5"/><path d="M3 30.5 H8 M12 30.5 H18" stroke="#b3b3b3" stroke-width="2"/><path d="M3 77 H8 M12 77 H18" stroke="#b3b3b3" stroke-width="2"/></svg>
<div class="a" style="left:1944px;top:378px;width:404px;height:65px;background:#efefef"></div>
<div class="a" style="left:1944px;top:441.5px;width:404px;height:1.5px;background:#e6e6e6"></div>
<svg style="left:1917.5px;top:403.5px" width="13" height="10" viewBox="0 0 13 10"><path d="M0 0 H13 L6.5 10 Z" fill="#a5a5a5"/></svg>
<svg style="left:1959.5px;top:400.5px" width="32" height="18" viewBox="0 0 32 18"><path d="M9 2 H8 C3.8 2 1.6 5 1.6 9 C1.6 13 3.8 16 8 16 H9 M23 2 H24 C28.2 2 30.4 5 30.4 9 C30.4 13 28.2 16 24 16 H23" stroke="#6a6a6a" stroke-width="3" fill="none"/><path d="M11 9 H21" stroke="#adadad" stroke-width="3"/></svg>
<div class="t" style="left:2002.6px;top:393.5px;line-height:34px;font-size:26.5px;font-weight:400;color:#4a4a4a">Chain</div>
<div class="a" style="left:2302px;top:396.5px;width:28px;height:28px;border:2px dotted #d0354f"></div>
<div class="a" style="left:1944px;top:443px;width:404px;height:66px;background:#fff"></div>
<div class="a" style="left:1944px;top:507.5px;width:404px;height:1.5px;background:#e6e6e6"></div>
<svg style="left:2002px;top:461px" width="32" height="30" viewBox="0 0 32 30"><path d="M1.5 27.5 C7 27 9 24 10.5 16 C12 7 13 3 20 2" stroke="#6a6a6a" stroke-width="2.8" fill="none"/><path d="M16 15 L27 27 M27 15 L16 27" stroke="#6a6a6a" stroke-width="3.2"/></svg>
<div class="t" style="left:2046.8px;top:459px;line-height:34px;font-size:27px;font-weight:400;color:#4a4a4a">Assign</div>
<svg style="left:2304.5px;top:465.5px" width="22" height="22" viewBox="0 0 22 22"><rect x="1.2" y="1.2" width="19.6" height="19.6" fill="none" stroke="#6a6a6a" stroke-width="2.2"/><path d="M6.5 6.5 L15.5 15.5 M15.5 6.5 L6.5 15.5" stroke="#6a6a6a" stroke-width="2.4"/></svg>
<div class="a" style="left:1944px;top:509px;width:404px;height:66px;background:#fff"></div>
<div class="a" style="left:1944px;top:573.5px;width:404px;height:1.5px;background:#e6e6e6"></div>
<svg style="left:2004px;top:528.2px" width="27.6" height="27.6" viewBox="0 0 27.6 27.6"><rect x="0.0" y="0.0" width="6.9" height="6.9" fill="#646464"/><rect x="13.8" y="0.0" width="6.9" height="6.9" fill="#bcbcbc"/><rect x="6.9" y="6.9" width="6.9" height="6.9" fill="#8a8a8a"/><rect x="20.700000000000003" y="6.9" width="6.9" height="6.9" fill="#d6d6d6"/><rect x="0.0" y="13.8" width="6.9" height="6.9" fill="#646464"/><rect x="13.8" y="13.8" width="6.9" height="6.9" fill="#bcbcbc"/><rect x="6.9" y="20.700000000000003" width="6.9" height="6.9" fill="#8a8a8a"/><rect x="20.700000000000003" y="20.700000000000003" width="6.9" height="6.9" fill="#d6d6d6"/></svg>
<div class="t" style="left:2046.8px;top:525.0px;line-height:34px;font-size:27px;font-weight:400;color:#4a4a4a">Low Air Pressure</div>
<div class="a" style="left:2303px;top:529.0px;width:26px;height:26px;border-radius:50%;background:#e9e9f0"></div><div class="a" style="left:2305.5px;top:531.5px;width:21px;height:21px;border-radius:50%;background:linear-gradient(160deg,#6a8ee8,#a6dcf3)"></div>
<div class="a" style="left:1944px;top:575px;width:404px;height:66px;background:#fff"></div>
<div class="a" style="left:1944px;top:639.5px;width:404px;height:1.5px;background:#e6e6e6"></div>
<svg style="left:2004px;top:594.2px" width="27.6" height="27.6" viewBox="0 0 27.6 27.6"><rect x="0.0" y="0.0" width="6.9" height="6.9" fill="#646464"/><rect x="13.8" y="0.0" width="6.9" height="6.9" fill="#bcbcbc"/><rect x="6.9" y="6.9" width="6.9" height="6.9" fill="#8a8a8a"/><rect x="20.700000000000003" y="6.9" width="6.9" height="6.9" fill="#d6d6d6"/><rect x="0.0" y="13.8" width="6.9" height="6.9" fill="#646464"/><rect x="13.8" y="13.8" width="6.9" height="6.9" fill="#bcbcbc"/><rect x="6.9" y="20.700000000000003" width="6.9" height="6.9" fill="#8a8a8a"/><rect x="20.700000000000003" y="20.700000000000003" width="6.9" height="6.9" fill="#d6d6d6"/></svg>
<div class="t" style="left:2046.8px;top:591.0px;line-height:34px;font-size:27px;font-weight:400;color:#4a4a4a">Mid Temperature...</div>
<div class="a" style="left:2303px;top:595.0px;width:26px;height:26px;border-radius:50%;background:#e9e9f0"></div><div class="a" style="left:2305.5px;top:597.5px;width:21px;height:21px;border-radius:50%;background:linear-gradient(160deg,#a3ec8a,#8ee0e8)"></div>
<div class="a" style="left:1944px;top:641px;width:404px;height:66px;background:#fff"></div>
<div class="a" style="left:1944px;top:705.5px;width:404px;height:1.5px;background:#e6e6e6"></div>
<svg style="left:2004px;top:660.2px" width="27.6" height="27.6" viewBox="0 0 27.6 27.6"><rect x="0.0" y="0.0" width="6.9" height="6.9" fill="#646464"/><rect x="13.8" y="0.0" width="6.9" height="6.9" fill="#bcbcbc"/><rect x="6.9" y="6.9" width="6.9" height="6.9" fill="#8a8a8a"/><rect x="20.700000000000003" y="6.9" width="6.9" height="6.9" fill="#d6d6d6"/><rect x="0.0" y="13.8" width="6.9" height="6.9" fill="#646464"/><rect x="13.8" y="13.8" width="6.9" height="6.9" fill="#bcbcbc"/><rect x="6.9" y="20.700000000000003" width="6.9" height="6.9" fill="#8a8a8a"/><rect x="20.700000000000003" y="20.700000000000003" width="6.9" height="6.9" fill="#d6d6d6"/></svg>
<div class="t" style="left:2046.8px;top:657.0px;line-height:34px;font-size:27px;font-weight:400;color:#4a4a4a">Mid Temperature...</div>
<div class="a" style="left:2303px;top:661.0px;width:26px;height:26px;border-radius:50%;background:#e9e9f0"></div><div class="a" style="left:2305.5px;top:663.5px;width:21px;height:21px;border-radius:50%;background:linear-gradient(160deg,#f4a070,#f7dd7a)"></div>
<div class="a" style="left:1944px;top:707px;width:404px;height:66px;background:#6952e2"></div>
<svg style="left:2004px;top:726.2px" width="27.6" height="27.6" viewBox="0 0 27.6 27.6"><rect x="0.0" y="0.0" width="6.9" height="6.9" fill="#ffffff"/><rect x="13.8" y="0.0" width="6.9" height="6.9" fill="#a898ee"/><rect x="6.9" y="6.9" width="6.9" height="6.9" fill="#c9bff5"/><rect x="20.700000000000003" y="6.9" width="6.9" height="6.9" fill="#8f7deb"/><rect x="0.0" y="13.8" width="6.9" height="6.9" fill="#ffffff"/><rect x="13.8" y="13.8" width="6.9" height="6.9" fill="#a898ee"/><rect x="6.9" y="20.700000000000003" width="6.9" height="6.9" fill="#c9bff5"/><rect x="20.700000000000003" y="20.700000000000003" width="6.9" height="6.9" fill="#8f7deb"/></svg>
<div class="t" style="left:2046.8px;top:723px;line-height:34px;font-size:27px;font-weight:400;color:#fff">Mid Temperature...</div>
<div class="a" style="left:2303px;top:727px;width:26px;height:26px;border-radius:50%;background:#7662e4"></div><div class="a" style="left:2305.5px;top:729.5px;width:21px;height:21px;border-radius:50%;background:linear-gradient(160deg,#f28a7a,#f0a17e)"></div>
<div class="a" style="left:1944px;top:773px;width:404px;height:35px;background:#fff"></div>
<svg style="left:2010px;top:782.5px" width="16" height="16" viewBox="0 0 16 16"><path d="M8 0 V16 M0 8 H16" stroke="#4a4a4a" stroke-width="2.2"/></svg>
<svg style="left:1970px;top:449px" width="22" height="341" viewBox="0 0 22 341"><path d="M3 0 V341" stroke="#b3b3b3" stroke-width="2" stroke-dasharray="5 5"/><path d="M3 31 H8 M12 31 H18" stroke="#b3b3b3" stroke-width="2"/><path d="M3 97 H8 M12 97 H18" stroke="#b3b3b3" stroke-width="2"/><path d="M3 163 H8 M12 163 H18" stroke="#b3b3b3" stroke-width="2"/><path d="M3 229 H8 M12 229 H18" stroke="#b3b3b3" stroke-width="2"/><path d="M3 341 H8 M12 341 H18" stroke="#b3b3b3" stroke-width="2"/></svg>
<svg style="left:1970px;top:707px" width="22" height="66" viewBox="0 0 22 66"><path d="M3 0 V66" stroke="#fff" stroke-width="2" stroke-dasharray="5 5"/><path d="M3 37 H8 M12 37 H18" stroke="#fff" stroke-width="2"/></svg>
<svg style="left:2348px;top:0" width="140" height="1700" viewBox="2348 0 140 1700"><path d="M2353 436 V440 M2361 436 V440 M2369 432 V440 M2377 436 V440 M2385 436 V440 M2393 436 V440 M2401 436 V440 M2409 432 V440 M2417 436 V440 M2425 436 V440 M2433 436 V440 M2441 436 V440 M2449 432 V440 M2457 436 V440 M2465 436 V440 M2473 436 V440 M2481 436 V440 " stroke="#9a9a9a" stroke-width="1.8"/></svg>
<div class="t" style="left:2362.5px;top:399.0px;line-height:28px;font-size:17.8px;font-weight:700;color:#8f8f8f">0</div>
<div class="t" style="left:2439px;top:399.0px;line-height:28px;font-size:17.8px;font-weight:700;color:#8f8f8f">15</div>
<div class="a" style="left:2368px;top:461px;width:120px;height:32px;background:#e1e1e1;border-radius:5px 0 0 5px"></div>
<div class="a" style="left:1944px;top:840px;width:404px;height:65px;background:#efefef"></div>
<div class="a" style="left:1944px;top:903.5px;width:404px;height:1.5px;background:#e6e6e6"></div>
<svg style="left:1917.5px;top:865.5px" width="13" height="10" viewBox="0 0 13 10"><path d="M0 0 H13 L6.5 10 Z" fill="#a5a5a5"/></svg>
<svg style="left:1960.5px;top:857.5px" width="31" height="31" viewBox="0 0 31 31"><path d="M15.5 0 V9 M15.5 21.5 V31 M0 15.5 H8.5 M22.5 15.5 H31" stroke="#6a6a6a" stroke-width="3.5"/></svg>
<div class="t" style="left:2002.6px;top:855.5px;line-height:34px;font-size:26.5px;font-weight:400;color:#4a4a4a">Detect</div>
<div class="a" style="left:2302px;top:858.5px;width:28px;height:28px;border:2px dotted #d0354f"></div>
<svg style="left:2348px;top:0" width="140" height="1700" viewBox="2348 0 140 1700"><path d="M2369 894 V902 M2377 898 V902 M2385 898 V902 M2393 898 V902 M2401 898 V902 M2409 894 V902 M2417 898 V902 M2425 898 V902 M2433 898 V902 M2441 898 V902 M2449 894 V902 M2457 898 V902 M2465 898 V902 M2473 898 V902 M2481 898 V902 " stroke="#9a9a9a" stroke-width="1.8"/></svg>
<div class="t" style="left:2362.5px;top:861.0px;line-height:28px;font-size:17.8px;font-weight:700;color:#8f8f8f">0</div>
<div class="t" style="left:2434px;top:861.0px;line-height:28px;font-size:17.8px;font-weight:700;color:#8f8f8f">0.2</div>
<div class="a" style="left:1944px;top:905px;width:404px;height:65px;background:#fff"></div>
<div class="a" style="left:1922px;top:932px;width:8px;height:8px;border-radius:50%;background:#e8973a"></div>
<svg style="left:2006px;top:926.0px" width="23" height="23" viewBox="0 0 23 23"><path d="M0.8 5 V1.4 H22.2 V5 M11.5 1.4 V21.6 M5.5 21.6 H17.5" stroke="#e8973a" stroke-width="2.8" fill="none"/></svg>
<div class="t" style="left:2046.8px;top:920.5px;line-height:34px;font-size:27px;font-weight:400;color:#e8973a">Text [Pressure]</div>
<svg style="left:2304.5px;top:926.0px" width="24" height="24" viewBox="0 0 23 23"><path d="M0.8 5 V1.4 H22.2 V5 M11.5 1.4 V21.6 M5.5 21.6 H17.5" stroke="#5a5a5a" stroke-width="2.8" fill="none"/></svg>
<div class="a" style="left:2359px;top:932px;width:18px;height:18px;border-radius:50%;background:#e0e0e0"></div>
<div class="a" style="left:1944px;top:970px;width:404px;height:45px;background:#efefef"></div>
<svg style="left:1968px;top:984.5px" width="25" height="17" viewBox="0 0 25 17"><path d="M5 8 C9 8 10 4 20 3 M5 8 C9 8 10 12 20 13.5" stroke="#a8a8a8" stroke-width="2" fill="none"/><path d="M0.5 8 L4.5 4 L8.5 8 L4.5 12 Z" fill="#6a6a6a"/><circle cx="20.5" cy="3.2" r="3.2" fill="#6a6a6a"/><circle cx="20.5" cy="13.5" r="3.5" fill="#6a6a6a"/></svg>
<div class="t" style="left:2004.7px;top:975.5px;line-height:34px;font-size:22.1px;font-weight:400;color:#4a4a4a">Condition [Mid_16_19]</div>
<div class="t" style="left:2368px;top:978.0px;width:120px;overflow:hidden;line-height:32px;font-size:22px;color:#a0a0a0">Rotation of BTN</div>
<div class="a" style="left:1944px;top:1015px;width:404px;height:65px;background:#fff"></div>
<svg style="left:2006px;top:1036.0px" width="23" height="23" viewBox="0 0 23 23"><path d="M0.8 5 V1.4 H22.2 V5 M11.5 1.4 V21.6 M5.5 21.6 H17.5" stroke="#6a6a6a" stroke-width="2.8" fill="none"/></svg>
<div class="t" style="left:2046.8px;top:1030.5px;line-height:34px;font-size:27px;font-weight:400;color:#4a4a4a">Text [Message]</div>
<svg style="left:2304.5px;top:1036.0px" width="24" height="24" viewBox="0 0 23 23"><path d="M0.8 5 V1.4 H22.2 V5 M11.5 1.4 V21.6 M5.5 21.6 H17.5" stroke="#5a5a5a" stroke-width="2.8" fill="none"/></svg>
<div class="a" style="left:2359px;top:1041.5px;width:18px;height:18px;border-radius:50%;background:#e0e0e0"></div>
<svg style="left:1970px;top:1021px" width="22" height="53" viewBox="0 0 22 53"><path d="M3 0 V53" stroke="#b3b3b3" stroke-width="2" stroke-dasharray="5 5"/><path d="M3 30.5 H8 M12 30.5 H18" stroke="#b3b3b3" stroke-width="2"/></svg>
<div class="a" style="left:1944px;top:1080px;width:404px;height:45px;background:#efefef"></div>
<svg style="left:1968px;top:1094.5px" width="25" height="17" viewBox="0 0 25 17"><path d="M5 8 C9 8 10 4 20 3 M5 8 C9 8 10 12 20 13.5" stroke="#a8a8a8" stroke-width="2" fill="none"/><path d="M0.5 8 L4.5 4 L8.5 8 L4.5 12 Z" fill="#6a6a6a"/><circle cx="20.5" cy="3.2" r="3.2" fill="#6a6a6a"/><circle cx="20.5" cy="13.5" r="3.5" fill="#6a6a6a"/></svg>
<div class="t" style="left:2004.7px;top:1085.5px;line-height:34px;font-size:22.1px;font-weight:400;color:#4a4a4a">Condition [Mid_19_23]</div>
<div class="t" style="left:2368px;top:1088.0px;width:120px;overflow:hidden;line-height:32px;font-size:22px;color:#a0a0a0">Rotation of BTN</div>
<div class="a" style="left:1944px;top:1125px;width:404px;height:65px;background:#fff"></div>
<svg style="left:2006px;top:1146.0px" width="23" height="23" viewBox="0 0 23 23"><path d="M0.8 5 V1.4 H22.2 V5 M11.5 1.4 V21.6 M5.5 21.6 H17.5" stroke="#6a6a6a" stroke-width="2.8" fill="none"/></svg>
<div class="t" style="left:2046.8px;top:1140.5px;line-height:34px;font-size:27px;font-weight:400;color:#4a4a4a">Text [Message]</div>
<svg style="left:2304.5px;top:1146.0px" width="24" height="24" viewBox="0 0 23 23"><path d="M0.8 5 V1.4 H22.2 V5 M11.5 1.4 V21.6 M5.5 21.6 H17.5" stroke="#5a5a5a" stroke-width="2.8" fill="none"/></svg>
<div class="a" style="left:2359px;top:1151.5px;width:18px;height:18px;border-radius:50%;background:#e0e0e0"></div>
<svg style="left:1970px;top:1131px" width="22" height="53" viewBox="0 0 22 53"><path d="M3 0 V53" stroke="#b3b3b3" stroke-width="2" stroke-dasharray="5 5"/><path d="M3 30.5 H8 M12 30.5 H18" stroke="#b3b3b3" stroke-width="2"/></svg>
<div class="a" style="left:1944px;top:1190px;width:404px;height:45px;background:#efefef"></div>
<svg style="left:1968px;top:1204.5px" width="25" height="17" viewBox="0 0 25 17"><path d="M5 8 C9 8 10 4 20 3 M5 8 C9 8 10 12 20 13.5" stroke="#a8a8a8" stroke-width="2" fill="none"/><path d="M0.5 8 L4.5 4 L8.5 8 L4.5 12 Z" fill="#6a6a6a"/><circle cx="20.5" cy="3.2" r="3.2" fill="#6a6a6a"/><circle cx="20.5" cy="13.5" r="3.5" fill="#6a6a6a"/></svg>
<div class="t" style="left:2004.7px;top:1195.5px;line-height:34px;font-size:22.1px;font-weight:400;color:#4a4a4a">Condition [Mid_High_23_...</div>
<div class="t" style="left:2368px;top:1198.0px;width:120px;overflow:hidden;line-height:32px;font-size:22px;color:#a0a0a0">Rotation of BTN</div>
<div class="a" style="left:1944px;top:1235px;width:404px;height:65px;background:#fff"></div>
<svg style="left:2006px;top:1256.0px" width="23" height="23" viewBox="0 0 23 23"><path d="M0.8 5 V1.4 H22.2 V5 M11.5 1.4 V21.6 M5.5 21.6 H17.5" stroke="#6a6a6a" stroke-width="2.8" fill="none"/></svg>
<div class="t" style="left:2046.8px;top:1250.5px;line-height:34px;font-size:27px;font-weight:400;color:#4a4a4a">Text [Message]</div>
<svg style="left:2304.5px;top:1256.0px" width="24" height="24" viewBox="0 0 23 23"><path d="M0.8 5 V1.4 H22.2 V5 M11.5 1.4 V21.6 M5.5 21.6 H17.5" stroke="#5a5a5a" stroke-width="2.8" fill="none"/></svg>
<div class="a" style="left:2359px;top:1261.5px;width:18px;height:18px;border-radius:50%;background:#e0e0e0"></div>
<svg style="left:1970px;top:1241px" width="22" height="53" viewBox="0 0 22 53"><path d="M3 0 V53" stroke="#b3b3b3" stroke-width="2" stroke-dasharray="5 5"/><path d="M3 30.5 H8 M12 30.5 H18" stroke="#b3b3b3" stroke-width="2"/></svg>
<div class="a" style="left:1944px;top:1300px;width:404px;height:45px;background:#efefef"></div>
<svg style="left:1968px;top:1314.5px" width="25" height="17" viewBox="0 0 25 17"><path d="M5 8 C9 8 10 4 20 3 M5 8 C9 8 10 12 20 13.5" stroke="#a8a8a8" stroke-width="2" fill="none"/><path d="M0.5 8 L4.5 4 L8.5 8 L4.5 12 Z" fill="#6a6a6a"/><circle cx="20.5" cy="3.2" r="3.2" fill="#6a6a6a"/><circle cx="20.5" cy="13.5" r="3.5" fill="#6a6a6a"/></svg>
<div class="t" style="left:2004.7px;top:1305.5px;line-height:34px;font-size:22.1px;font-weight:400;color:#4a4a4a">Condition [High_26_32]</div>
<div class="t" style="left:2368px;top:1308.0px;width:120px;overflow:hidden;line-height:32px;font-size:22px;color:#a0a0a0">Rotation of BTN</div>
<div class="a" style="left:1944px;top:1345px;width:404px;height:65px;background:#fff"></div>
<svg style="left:2006px;top:1366.0px" width="23" height="23" viewBox="0 0 23 23"><path d="M0.8 5 V1.4 H22.2 V5 M11.5 1.4 V21.6 M5.5 21.6 H17.5" stroke="#6a6a6a" stroke-width="2.8" fill="none"/></svg>
<div class="t" style="left:2046.8px;top:1360.5px;line-height:34px;font-size:27px;font-weight:400;color:#4a4a4a">Text [Message]</div>
<svg style="left:2304.5px;top:1366.0px" width="24" height="24" viewBox="0 0 23 23"><path d="M0.8 5 V1.4 H22.2 V5 M11.5 1.4 V21.6 M5.5 21.6 H17.5" stroke="#5a5a5a" stroke-width="2.8" fill="none"/></svg>
<div class="a" style="left:2359px;top:1371.5px;width:18px;height:18px;border-radius:50%;background:#e0e0e0"></div>
<svg style="left:1970px;top:1351px" width="22" height="53" viewBox="0 0 22 53"><path d="M3 0 V53" stroke="#b3b3b3" stroke-width="2" stroke-dasharray="5 5"/><path d="M3 30.5 H8 M12 30.5 H18" stroke="#b3b3b3" stroke-width="2"/></svg>
<div class="a" style="left:1944px;top:1410px;width:404px;height:45px;background:#efefef"></div>
<svg style="left:1968px;top:1424.5px" width="25" height="17" viewBox="0 0 25 17"><path d="M5 8 C9 8 10 4 20 3 M5 8 C9 8 10 12 20 13.5" stroke="#a8a8a8" stroke-width="2" fill="none"/><path d="M0.5 8 L4.5 4 L8.5 8 L4.5 12 Z" fill="#6a6a6a"/><circle cx="20.5" cy="3.2" r="3.2" fill="#6a6a6a"/><circle cx="20.5" cy="13.5" r="3.5" fill="#6a6a6a"/></svg>
<div class="t" style="left:2004.7px;top:1415.5px;line-height:34px;font-size:22.1px;font-weight:400;color:#4a4a4a">Very_High_32</div>
<div class="t" style="left:2368px;top:1418.0px;width:120px;overflow:hidden;line-height:32px;font-size:22px;color:#a0a0a0">Rotation of BTN</div>
<div class="a" style="left:1944px;top:1455px;width:404px;height:66px;background:#fff"></div>
<div class="a" style="left:1944px;top:1519.5px;width:404px;height:1.5px;background:#e6e6e6"></div>
<svg style="left:2006px;top:1476.0px" width="23" height="23" viewBox="0 0 23 23"><path d="M0.8 5 V1.4 H22.2 V5 M11.5 1.4 V21.6 M5.5 21.6 H17.5" stroke="#6a6a6a" stroke-width="2.8" fill="none"/></svg>
<div class="t" style="left:2046.8px;top:1470.5px;line-height:34px;font-size:27px;font-weight:400;color:#4a4a4a">Text [Message]</div>
<svg style="left:2304.5px;top:1476.0px" width="24" height="24" viewBox="0 0 23 23"><path d="M0.8 5 V1.4 H22.2 V5 M11.5 1.4 V21.6 M5.5 21.6 H17.5" stroke="#5a5a5a" stroke-width="2.8" fill="none"/></svg>
<div class="a" style="left:2359px;top:1481.5px;width:18px;height:18px;border-radius:50%;background:#e0e0e0"></div>
<svg style="left:1970px;top:1461px" width="22" height="53" viewBox="0 0 22 53"><path d="M3 0 V53" stroke="#b3b3b3" stroke-width="2" stroke-dasharray="5 5"/><path d="M3 30.5 H8 M12 30.5 H18" stroke="#b3b3b3" stroke-width="2"/></svg>
<svg style="left:1970px;top:911px" width="22" height="53" viewBox="0 0 22 53"><path d="M3 0 V53" stroke="#b3b3b3" stroke-width="2" stroke-dasharray="5 5"/><path d="M3 31 H8 M12 31 H18" stroke="#b3b3b3" stroke-width="2"/></svg>
<div class="a" style="left:1944px;top:1521px;width:404px;height:34px;background:#fff"></div>
<svg style="left:2010px;top:1530.0px" width="16" height="16" viewBox="0 0 16 16"><path d="M8 0 V16 M0 8 H16" stroke="#4a4a4a" stroke-width="2.2"/></svg>
<svg style="left:1970px;top:1521px" width="22" height="17" viewBox="0 0 22 17"><path d="M3 0 V17" stroke="#b3b3b3" stroke-width="2" stroke-dasharray="5 5"/><path d="M3 17 H8 M12 17 H18" stroke="#b3b3b3" stroke-width="2"/></svg>
<div class="a" style="left:2280px;top:956px;width:38px;height:30px;background:#fff;border-radius:3px;box-shadow:0 1px 3px rgba(0,0,0,0.15)"></div>
<svg style="left:2292px;top:964px" width="14" height="14" viewBox="0 0 14 14"><path d="M7 0 V14 M0 7 H14" stroke="#4a4a4a" stroke-width="2"/></svg>
<div class="a" style="left:1944px;top:1588px;width:404px;height:59.5px;background:#efefef"></div>
<div class="t" style="left:1944px;top:1600px;width:404px;text-align:center;line-height:34px;font-size:27.5px;color:#333">Add Trigger</div>
<div class="a" style="left:2160px;top:1560px;width:328px;height:140px;background:radial-gradient(ellipse 200px 90px at 200px 100px, rgba(0,0,0,0.045), rgba(0,0,0,0) 100%)"></div>
<svg style="left:2270px;top:1630px" width="180" height="80" viewBox="2270 1630 180 80"><path d="M2303 1638.5 H2415 A25.5 25.5 0 0 1 2415 1689.5 H2380 C2374 1689.5 2370 1692 2366 1696 L2358.5 1704 L2351 1696 C2347 1692 2343 1689.5 2337 1689.5 H2303 A25.5 25.5 0 0 1 2303 1638.5 Z" fill="#fafafa" stroke="#fff" stroke-width="1.5"/></svg>
<div class="t" style="left:2278px;top:1647px;width:162px;text-align:center;line-height:34px;font-size:27.9px;color:#1f1f1f">ProtoPie</div>
<!-- ============ PROPERTIES PANEL ============ -->
<div class="a" style="left:2490px;top:179px;width:308px;height:1521px;background:#fff"></div>
<div class="a" style="left:2522.5px;top:212.5px;width:320px;height:190.5px;background:#fafafa;border:1.5px solid #efefef;border-radius:12px"></div>
<svg style="left:2558px;top:264px" width="27.6" height="27.6" viewBox="0 0 27.6 27.6"><rect x="0.0" y="0.0" width="6.9" height="6.9" fill="#646464"/><rect x="13.8" y="0.0" width="6.9" height="6.9" fill="#bcbcbc"/><rect x="6.9" y="6.9" width="6.9" height="6.9" fill="#8a8a8a"/><rect x="20.700000000000003" y="6.9" width="6.9" height="6.9" fill="#d6d6d6"/><rect x="0.0" y="13.8" width="6.9" height="6.9" fill="#646464"/><rect x="13.8" y="13.8" width="6.9" height="6.9" fill="#bcbcbc"/><rect x="6.9" y="20.700000000000003" width="6.9" height="6.9" fill="#8a8a8a"/><rect x="20.700000000000003" y="20.700000000000003" width="6.9" height="6.9" fill="#d6d6d6"/></svg>
<div class="t" style="left:2612.5px;top:261px;line-height:34px;font-size:28px;color:#2f2f2f">Mid Temperature</div>
<div class="a" style="left:2556px;top:318px;width:290px;height:51.5px;background:#efefef;border-radius:8px"></div>
<svg style="left:2575px;top:328.5px" width="30.5" height="30.5" viewBox="0 0 30 30"><rect width="30" height="30" fill="#707070"/><rect x="4" y="4" width="7" height="6.5" fill="#fff"/><rect x="20" y="20.5" width="7" height="6.5" fill="#fff"/><path d="M11 7.2 C18 7.2 23.5 12 23.5 20.5" stroke="#d5d5d5" stroke-width="2.6" fill="none"/></svg>
<div class="t" style="left:2615px;top:327px;line-height:32px;font-size:25px;color:#2f2f2f">Color - Very High</div>
<div class="t" style="left:2522.5px;top:451.5px;line-height:32px;font-size:24.1px;font-weight:700;color:#111">Mapping</div>
<div class="a" style="left:2522.5px;top:514px;width:300px;height:83px;background:#fafafa;border-radius:8px"></div>
<div class="t" style="left:2554px;top:531px;width:120px;text-align:center;line-height:24px;font-size:21.1px;color:#666">Rotation of<br>BTN</div>
<svg style="left:2712.5px;top:550px" width="21" height="11" viewBox="0 0 21 11"><path d="M6.5 1.2 H5.5 C2.8 1.2 1.2 3 1.2 5.5 C1.2 8 2.8 9.8 5.5 9.8 H6.5 M14.5 1.2 H15.5 C18.2 1.2 19.8 3 19.8 5.5 C19.8 8 18.2 9.8 15.5 9.8 H14.5" stroke="#b5b5b5" stroke-width="1.8" fill="none"/><path d="M7.5 5.5 H13.5" stroke="#b5b5b5" stroke-width="1.8"/></svg>
<div class="t" style="left:2752.5px;top:531px;width:120px;line-height:24px;font-size:21.1px;color:#666">&nbsp;&nbsp;&nbsp;Opacity<br>Color</div>
<div class="a" style="left:2522px;top:617.5px;width:300px;height:220px;background:#fafafa;border-radius:0"></div>
<div class="t" style="left:2538.8px;top:632px;line-height:32px;font-size:19.4px;color:#999">Range<span style="color:#111">1</span></div>
<svg style="left:2537px;top:702px" width="10" height="62" viewBox="0 0 10 62"><path d="M9 1 H1.2 V61 H9" stroke="#a8a8a8" stroke-width="2" fill="none"/></svg>
<div class="a" style="left:2552px;top:676px;width:157.5px;height:55.5px;background:#efefef;border-radius:8px"></div>
<div class="t" style="left:2565px;top:687.5px;line-height:32px;font-size:25.2px;color:#222">259</div>
<svg style="left:2719px;top:696px" width="21" height="11" viewBox="0 0 21 11"><path d="M6.5 1.2 H5.5 C2.8 1.2 1.2 3 1.2 5.5 C1.2 8 2.8 9.8 5.5 9.8 H6.5 M14.5 1.2 H15.5 C18.2 1.2 19.8 3 19.8 5.5 C19.8 8 18.2 9.8 15.5 9.8 H14.5" stroke="#a8a8a8" stroke-width="1.8" fill="none"/><path d="M7.5 5.5 H13.5" stroke="#a8a8a8" stroke-width="1.8"/></svg>
<div class="a" style="left:2748px;top:676px;width:120px;height:55.5px;background:#efefef;border-radius:8px"></div>
<div class="t" style="left:2760px;top:687.5px;line-height:32px;font-size:25.2px;color:#222">0</div>
<div class="a" style="left:2552px;top:740px;width:157.5px;height:55.5px;background:#efefef;border-radius:8px"></div>
<div class="t" style="left:2565px;top:751.5px;line-height:32px;font-size:25.2px;color:#222">260</div>
<svg style="left:2719px;top:760px" width="21" height="11" viewBox="0 0 21 11"><path d="M6.5 1.2 H5.5 C2.8 1.2 1.2 3 1.2 5.5 C1.2 8 2.8 9.8 5.5 9.8 H6.5 M14.5 1.2 H15.5 C18.2 1.2 19.8 3 19.8 5.5 C19.8 8 18.2 9.8 15.5 9.8 H14.5" stroke="#a8a8a8" stroke-width="1.8" fill="none"/><path d="M7.5 5.5 H13.5" stroke="#a8a8a8" stroke-width="1.8"/></svg>
<div class="a" style="left:2748px;top:740px;width:120px;height:55.5px;background:#efefef;border-radius:8px"></div>
<div class="t" style="left:2760px;top:751.5px;line-height:32px;font-size:25.2px;color:#222">100</div>
<div class="t" style="left:2592.8px;top:797.5px;line-height:32px;font-size:20.8px;color:#888">Rotation</div>
<div class="t" style="left:2788px;top:797.5px;line-height:32px;font-size:20.8px;color:#888">Opacity</div>
<div class="a" style="left:2522px;top:844px;width:300px;height:43.5px;background:#fafafa"></div>
<svg style="left:2716px;top:859.5px" width="14.5" height="14" viewBox="0 0 14.5 14"><path d="M7.25 0 V14 M0 7 H14.5" stroke="#555" stroke-width="2.2"/></svg>
<div class="a" style="left:2492px;top:1658px;width:306px;height:1.5px;background:#e6e6e6"></div>
<div class="t" style="left:2510.7px;top:1674px;line-height:32px;font-size:23px;color:#e8973a">1 Missing Fonts</div>
<!--END-->
</body></html>
